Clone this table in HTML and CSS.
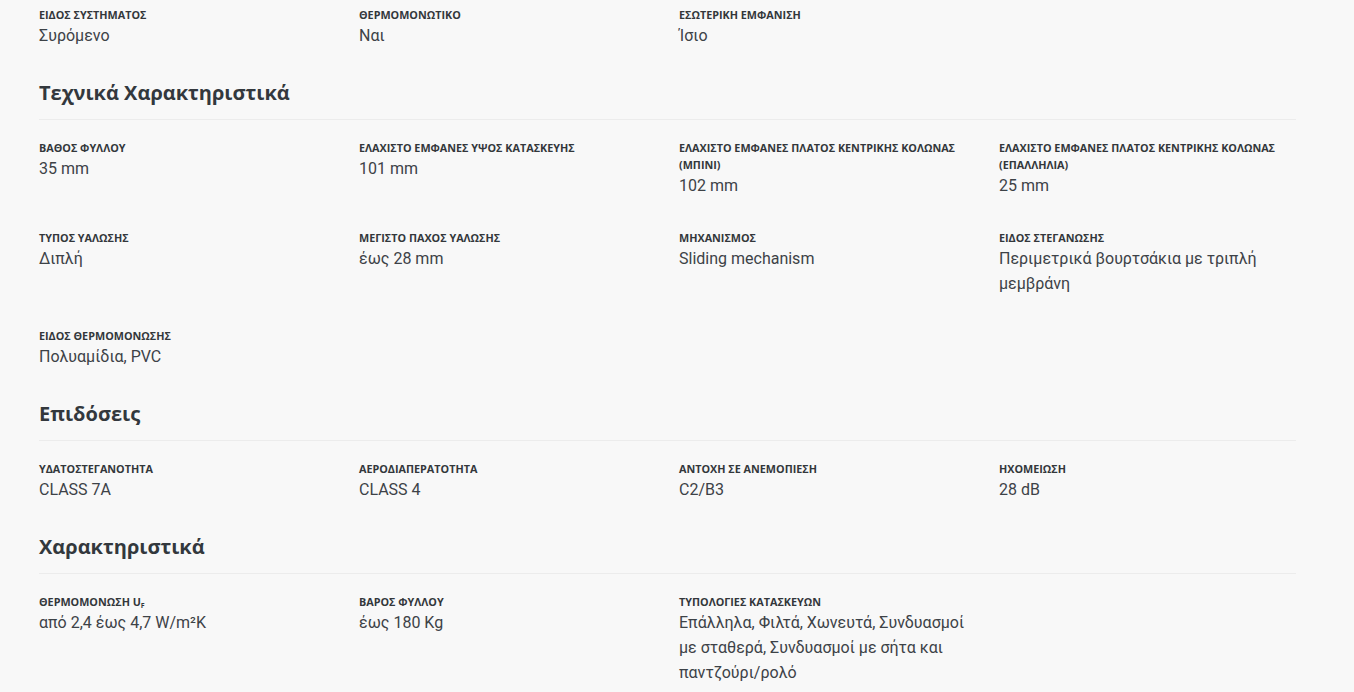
FILE: index.html
```html
<!DOCTYPE html>
<html lang="el">
<head>
    <meta charset="UTF-8">
    <meta name="viewport" content="width=device-width, initial-scale=1.0">
    <title>Προδιαγραφές</title>
    <link rel="stylesheet" href="styles.css">
</head>
<body>
    <div class="specs">
        <div class="spec-grid">
            <div class="spec">
                <div class="spec-label">Ειδος συστηματος</div>
                <div class="spec-value">Συρόμενο</div>
            </div>
            <div class="spec">
                <div class="spec-label">Θερμομονωτικο</div>
                <div class="spec-value">Ναι</div>
            </div>
            <div class="spec">
                <div class="spec-label">Εσωτερικη εμφανιση</div>
                <div class="spec-value">Ίσιο</div>
            </div>
        </div>

        <h2 class="spec-title">Τεχνικά Χαρακτηριστικά</h2>
        <div class="spec-grid">
            <div class="spec">
                <div class="spec-label">Βαθος φυλλου</div>
                <div class="spec-value">35 mm</div>
            </div>
            <div class="spec">
                <div class="spec-label">Ελαχιστο εμφανες υψος κατασκευης</div>
                <div class="spec-value">101 mm</div>
            </div>
            <div class="spec">
                <div class="spec-label">Ελαχιστο εμφανες πλατος κεντρικης κολωνας (μπινι)</div>
                <div class="spec-value">102 mm</div>
            </div>
            <div class="spec">
                <div class="spec-label">Ελαχιστο εμφανες πλατος κεντρικης κολωνας (επαλληλια)</div>
                <div class="spec-value">25 mm</div>
            </div>
            <div class="spec">
                <div class="spec-label">Τυπος υαλωσης</div>
                <div class="spec-value">Διπλή</div>
            </div>
            <div class="spec">
                <div class="spec-label">Μεγιστο παχος υαλωσης</div>
                <div class="spec-value">έως 28 mm</div>
            </div>
            <div class="spec">
                <div class="spec-label">Μηχανισμος</div>
                <div class="spec-value">Sliding mechanism</div>
            </div>
            <div class="spec">
                <div class="spec-label">Ειδος στεγανωσης</div>
                <div class="spec-value">Περιμετρικά βουρτσάκια με τριπλή μεμβράνη</div>
            </div>
            <div class="spec">
                <div class="spec-label">Ειδος θερμομονωσης</div>
                <div class="spec-value">Πολυαμίδια, PVC</div>
            </div>
        </div>

        <h2 class="spec-title">Επιδόσεις</h2>
        <div class="spec-grid">
            <div class="spec">
                <div class="spec-label">Υδατοστεγανοτητα</div>
                <div class="spec-value">CLASS 7A</div>
            </div>
            <div class="spec">
                <div class="spec-label">Αεροδιαπερατοτητα</div>
                <div class="spec-value">CLASS 4</div>
            </div>
            <div class="spec">
                <div class="spec-label">Αντοχη σε ανεμοπιεση</div>
                <div class="spec-value">C2/B3</div>
            </div>
            <div class="spec">
                <div class="spec-label">Ηχομειωση</div>
                <div class="spec-value">28 dB</div>
            </div>
        </div>

        <h2 class="spec-title">Χαρακτηριστικά</h2>
        <div class="spec-grid">
            <div class="spec">
                <div class="spec-label">Θερμομονωση U<sub>f</sub></div>
                <div class="spec-value">από 2,4 έως 4,7 W/m²K</div>
            </div>
            <div class="spec">
                <div class="spec-label">Βαρος φυλλου</div>
                <div class="spec-value">έως 180 Kg</div>
            </div>
            <div class="spec">
                <div class="spec-label">Τυπολογιες κατασκευων</div>
                <div class="spec-value">Επάλληλα, Φιλτά, Χωνευτά, Συνδυασμοί με σταθερά, Συνδυασμοί με σήτα και παντζούρι/ρολό</div>
            </div>
        </div>
    </div>
</body>
</html>
```

FILE: styles.css
```css
body {
    margin: 0;
    background-color: #f8f8f8;
    font-family: "Open Sans", "Noto Sans", sans-serif;
    color: #3c3c3c;
}
.specs {
    width: 1257px;
    margin-left: 39px;
    padding-top: 6px;
}
.spec-grid {
    display: grid;
    grid-template-columns: repeat(4, 290px);
    column-gap: 30px;
    row-gap: 31px;
    padding-bottom: 30px;
}
.spec-title + .spec-grid {
    padding-top: 19px;
}
.spec-label {
    font-size: 10.8px;
    line-height: 17px;
    font-weight: 700;
    text-transform: uppercase;
    color: #33373b;
}
.spec-label sub {
    font-size: 7px;
    vertical-align: -2px;
    line-height: 0;
}
.spec-value {
    font-family: Roboto, "Open Sans", sans-serif;
    font-size: 16px;
    line-height: 25px;
    color: #3d4247;
}
.spec-title {
    margin: 0;
    font-size: 20px;
    line-height: 29px;
    font-weight: 700;
    color: #33383d;
    padding-bottom: 12px;
    border-bottom: 1px solid #ececec;
}
```
